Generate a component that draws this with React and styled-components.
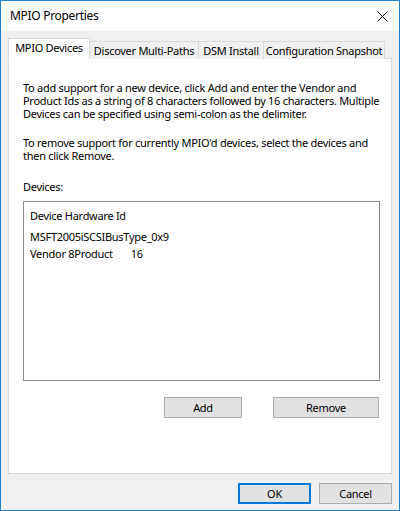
import React from 'react'
import styled, { createGlobalStyle } from 'styled-components'

const GlobalStyle = createGlobalStyle`
  * { box-sizing: border-box; }
  html, body { margin: 0; padding: 0; background: #fff; }
  body {
    font-family: "Noto Sans", "Segoe UI", sans-serif;
    font-size: 11px;
    letter-spacing: -0.28px;
    color: #000;
  }
`

const Window = styled.div`
  display: flex;
  flex-direction: column;
  width: 400px;
  height: 511px;
  border: 1px solid #1883d7;
  background: #f0f0f0;
`
const TitleBar = styled.div`
  display: flex;
  align-items: center;
  justify-content: space-between;
  height: 30px;
  padding: 0 11px 0 9px;
  background: #fff;
`
const Title = styled.span`
  font-size: 12px;
  letter-spacing: -0.3px;
  line-height: 30px;
`
const Body = styled.div`
  flex: 1;
  display: flex;
  flex-direction: column;
  padding: 7px 7px 6px 7px;
`
const TabStrip = styled.div`
  display: flex;
  align-items: flex-end;
  height: 21px;
  margin-bottom: -1px;
  position: relative;
  z-index: 1;
`
const Tab = styled.div`
  width: ${p => p.w}px;
  height: ${p => (p.active ? 21 : 18)}px;
  display: flex;
  align-items: center;
  justify-content: center;
  border: 1px solid #d9d9d9;
  border-bottom: ${p => (p.active ? '1px solid #fff' : 'none')};
  border-left: ${p => (p.first || p.active ? '1px solid #d9d9d9' : 'none')};
  background: ${p => (p.active ? '#fff' : '#f0f0f0')};
  padding-bottom: ${p => (p.active ? 3 : 0)}px;
  white-space: nowrap;
`
const Panel = styled.div`
  flex: 1;
  display: flex;
  flex-direction: column;
  background: #fff;
  border: 1px solid #d9d9d9;
  padding: 22px 12px 0 14px;
`
const Para = styled.p`
  margin: 0 0 ${p => p.mb || 0}px 0;
  line-height: 13px;
  white-space: nowrap;
`
const Label = styled.div`
  line-height: 13px;
  margin-bottom: 8px;
`
const ListBox = styled.div`
  width: 357px;
  height: 180px;
  border: 1px solid #828790;
  padding: 7px 6px 0 6px;
`
const ListRow = styled.div`
  line-height: 14px;
  margin-bottom: ${p => p.mb}px;
  white-space: pre;
`
const ButtonRow = styled.div`
  display: flex;
  justify-content: flex-end;
  gap: ${p => p.gap}px;
  margin-top: ${p => p.mt}px;
`
const Button = styled.button`
  width: ${p => p.w}px;
  height: 21px;
  padding: 0;
  font: inherit;
  letter-spacing: inherit;
  color: #000;
  background: #e1e1e1;
  border: ${p => (p.primary ? '2px solid #0078d7' : '1px solid #adadad')};
  border-radius: 0;
`

const CloseIcon = () => (
  <svg width="11" height="11" viewBox="0 0 11 11">
    <path d="M0.5 0.5 L10.5 10.5 M10.5 0.5 L0.5 10.5" stroke="#000" strokeWidth="1" />
  </svg>
)

const tabs = [
  { label: 'MPIO Devices', w: 82, active: true },
  { label: 'Discover Multi-Paths', w: 109 },
  { label: 'DSM Install', w: 65 },
  { label: 'Configuration Snapshot', w: 121 },
]

export default function App() {
  return (
    <>
      <GlobalStyle />
      <Window>
        <TitleBar>
          <Title>MPIO Properties</Title>
          <CloseIcon />
        </TitleBar>
        <Body>
          <TabStrip>
            {tabs.map((t, i) => (
              <Tab key={t.label} w={t.w} active={t.active} first={i === 0}>
                {t.label}
              </Tab>
            ))}
          </TabStrip>
          <Panel>
            <Para mb={16}>
              To add support for a new device, click Add and enter the Vendor and<br />
              Product Ids as a string of 8 characters followed by 16 characters. Multiple<br />
              Devices can be specified using semi-colon as the delimiter.
            </Para>
            <Para mb={18}>
              To remove support for currently MPIO'd devices, select the devices and<br />
              then click Remove.
            </Para>
            <Label>Devices:</Label>
            <ListBox>
              <ListRow mb={7}>Device Hardware Id</ListRow>
              <ListRow mb={3}>MSFT2005iSCSIBusType_0x9</ListRow>
              <ListRow mb={0}>{'Vendor 8Product       16'}</ListRow>
            </ListBox>
            <ButtonRow gap={31} mt={16}>
              <Button w={78}>Add</Button>
              <Button w={106}>Remove</Button>
            </ButtonRow>
          </Panel>
          <ButtonRow gap={8} mt={9}>
            <Button w={73} primary>OK</Button>
            <Button w={73}>Cancel</Button>
          </ButtonRow>
        </Body>
      </Window>
    </>
  )
}
